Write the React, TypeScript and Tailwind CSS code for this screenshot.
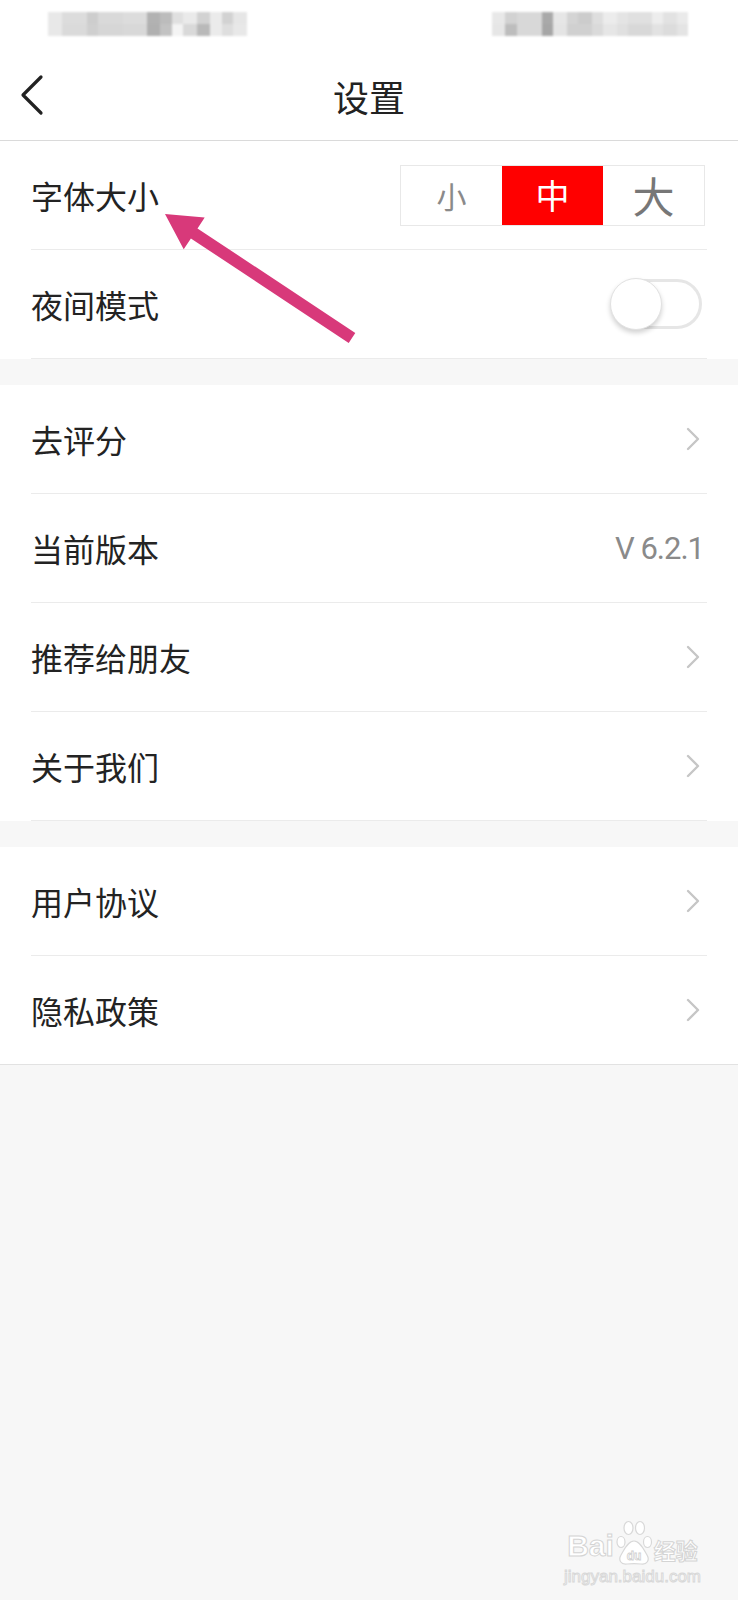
import React from "react";

type Cell = { w: string; top: string; bot: string };

const leftCells: Cell[] = [
  { w: "w-[14px]", top: "bg-[#e8e8e8]", bot: "bg-[#e8e8e8]" },
  { w: "w-[25px]", top: "bg-[#dcdcdc]", bot: "bg-[#dadada]" },
  { w: "w-[11px]", top: "bg-[#cdcdcd]", bot: "bg-[#cfcfcf]" },
  { w: "w-[25px]", top: "bg-[#d9d9d9]", bot: "bg-[#d6d6d6]" },
  { w: "w-[24px]", top: "bg-[#dcdcdc]", bot: "bg-[#d8d8d8]" },
  { w: "w-[13px]", top: "bg-[#b2b2b2]", bot: "bg-[#b0b0b0]" },
  { w: "w-[12px]", top: "bg-[#bcbcbc]", bot: "bg-[#c2c2c2]" },
  { w: "w-[11px]", top: "bg-[#e0e0e0]", bot: "bg-[#f4f4f4]" },
  { w: "w-[14px]", top: "bg-[#eaeaea]", bot: "bg-[#d9d9d9]" },
  { w: "w-[13px]", top: "bg-[#d2d2d2]", bot: "bg-[#b9b9b9]" },
  { w: "w-[12px]", top: "bg-[#ebebeb]", bot: "bg-[#ebebeb]" },
  { w: "w-[11px]", top: "bg-[#d2d2d2]", bot: "bg-[#dedede]" },
  { w: "w-[14px]", top: "bg-[#e6e6e6]", bot: "bg-[#e8e8e8]" },
];

const rightCells: Cell[] = [
  { w: "w-[13px]", top: "bg-[#e8e8e8]", bot: "bg-[#e6e6e6]" },
  { w: "w-[12px]", top: "bg-[#d2d2d2]", bot: "bg-[#bdbdbd]" },
  { w: "w-[25px]", top: "bg-[#d8d8d8]", bot: "bg-[#d8d8d8]" },
  { w: "w-[11px]", top: "bg-[#a9a9a9]", bot: "bg-[#a6a6a6]" },
  { w: "w-[14px]", top: "bg-[#e6e6e6]", bot: "bg-[#e4e4e4]" },
  { w: "w-[11px]", top: "bg-[#d4d4d4]", bot: "bg-[#d0d0d0]" },
  { w: "w-[14px]", top: "bg-[#cccccc]", bot: "bg-[#d0d0d0]" },
  { w: "w-[11px]", top: "bg-[#dedede]", bot: "bg-[#dadada]" },
  { w: "w-[14px]", top: "bg-[#ececec]", bot: "bg-[#e6e6e6]" },
  { w: "w-[11px]", top: "bg-[#e4e4e4]", bot: "bg-[#e0e0e0]" },
  { w: "w-[24px]", top: "bg-[#e0e0e0]", bot: "bg-[#d8d8d8]" },
  { w: "w-[11px]", top: "bg-[#ededed]", bot: "bg-[#e2e2e2]" },
  { w: "w-[14px]", top: "bg-[#e2e2e2]", bot: "bg-[#dcdcdc]" },
  { w: "w-[11px]", top: "bg-[#eaeaea]", bot: "bg-[#e4e4e4]" },
];

function Mosaic({ cells }: { cells: Cell[] }) {
  return (
    <div className="flex blur-[1px]">
      {cells.map((c, i) => (
        <div key={i} className={`flex flex-col ${c.w}`}>
          <div className={`h-[12px] ${c.top}`} />
          <div className={`h-[12px] ${c.bot}`} />
        </div>
      ))}
    </div>
  );
}

function Chevron() {
  return (
    <svg width="16" height="26" viewBox="0 0 16 26" className="mr-[6px]">
      <path d="M3 3 L13 13 L3 23" fill="none" stroke="#c6c6c6" strokeWidth="2.4" strokeLinecap="round" strokeLinejoin="round" />
    </svg>
  );
}

function Row({ label, children, last }: { label: string; children?: React.ReactNode; last?: boolean }) {
  return (
    <div className={`mx-[31px] flex items-center justify-between ${last ? "h-[108px]" : "h-[109px] border-b border-[#ebebeb]"}`}>
      <span className="text-[32px] leading-none text-[#232323]">{label}</span>
      {children}
    </div>
  );
}

export default function App() {
  return (
    <div className="relative w-[738px] h-[1600px] overflow-hidden bg-[#f7f7f7] font-['Noto_Sans_CJK_SC','Noto_Sans',sans-serif]">
      <div className="bg-white">
        <div className="h-[50px] flex justify-between items-start pt-[12px] pl-[48px] pr-[50px]">
          <Mosaic cells={leftCells} />
          <Mosaic cells={rightCells} />
        </div>
        <div className="h-[91px] border-b border-[#dadada] grid grid-cols-[100px_1fr_100px] items-center">
          <div className="pl-[20px] flex items-center">
            <svg width="26" height="42" viewBox="0 0 26 42">
              <path d="M21 3 L3 21 L21 39" fill="none" stroke="#222" strokeWidth="3.2" strokeLinecap="round" strokeLinejoin="round" />
            </svg>
          </div>
          <div className="text-center text-[36px] leading-none text-[#222] pt-[2px]">设置</div>
          <div />
        </div>
      </div>

      <div className="bg-white">
        <Row label="字体大小">
          <div className="mr-[2px] w-[305px] h-[61px] grid grid-cols-3 border border-[#e8e8e8]">
            <div className="flex items-center justify-center text-[30px] leading-none text-[#8a8a8a]">小</div>
            <div className="flex items-center justify-center bg-[#ff0000] text-[34px] leading-none text-white">中</div>
            <div className="flex items-center justify-center text-[42px] leading-none text-[#777777]">大</div>
          </div>
        </Row>
        <Row label="夜间模式">
          <div className="relative mr-[5px] w-[92px] h-[52px]">
            <div className="absolute left-[2px] right-0 top-[1px] bottom-[1px] rounded-full border-[3px] border-[#e6e6e6] bg-white" />
            <div className="absolute left-0 top-0 w-[52px] h-[52px] rounded-full bg-white border border-[#e2e2e2] shadow-[0_3px_5px_rgba(0,0,0,0.18)]" />
          </div>
        </Row>
      </div>

      <div className="h-[26px]" />

      <div className="bg-white">
        <Row label="去评分">
          <Chevron />
        </Row>
        <Row label="当前版本">
          <span className="mr-[3px] font-['Roboto',sans-serif] text-[31px] leading-none tracking-[-1px] text-[#8a8a8a]">V 6.2.1</span>
        </Row>
        <Row label="推荐给朋友">
          <Chevron />
        </Row>
        <Row label="关于我们">
          <Chevron />
        </Row>
      </div>

      <div className="h-[26px]" />

      <div className="bg-white border-b border-[#e2e2e2]">
        <Row label="用户协议">
          <Chevron />
        </Row>
        <Row label="隐私政策" last>
          <Chevron />
        </Row>
      </div>

      {/* annotation arrow */}
      <svg className="absolute left-0 top-0 pointer-events-none" width="738" height="1600" viewBox="0 0 738 1600">
        <polygon
          points="165,214 204.7,217.6 197.5,228.4 355.3,333 348.7,343 190.9,238.4 183.7,249.2"
          fill="#d8397a"
        />
      </svg>

      {/* watermark */}
      <div className="absolute left-[564px] top-[1517px] flex flex-col items-center text-white">
        <div className="flex items-end h-[50px]">
          <span className="font-['Liberation_Sans',sans-serif] font-bold text-[30px] leading-none [-webkit-text-stroke:1px_#d4d4d4] mb-[6px]">Bai</span>
          <svg width="38" height="50" viewBox="0 0 38 50" className="mx-[1px]">
            <g fill="#ffffff" stroke="#d8d8d8" strokeWidth="1.2">
              <ellipse cx="6" cy="25" rx="4" ry="5.5" />
              <ellipse cx="13.5" cy="11" rx="4.5" ry="6.5" />
              <ellipse cx="25" cy="11" rx="4.5" ry="6.5" />
              <ellipse cx="32.5" cy="25" rx="4" ry="5.5" />
              <path d="M19 24 C13 24 9 33 6 38 C3 43 6 48 12 47 C16 46.5 22 46.5 26 47 C32 48 35 43 32 38 C29 33 25 24 19 24 Z" />
            </g>
            <text x="19" y="43" textAnchor="middle" fontFamily="Liberation Sans, sans-serif" fontWeight="bold" fontSize="12" fill="#ffffff" stroke="#d0d0d0" strokeWidth="0.8">du</text>
          </svg>
          <span className="font-['Noto_Sans_CJK_SC',sans-serif] font-bold text-[22px] leading-none [-webkit-text-stroke:1px_#d4d4d4] mb-[7px]">经验</span>
        </div>
        <div className="font-['Liberation_Sans',sans-serif] text-[17px] leading-none [-webkit-text-stroke:1px_#d8d8d8] mt-[1px]">jingyan.baidu.com</div>
      </div>
    </div>
  );
}
